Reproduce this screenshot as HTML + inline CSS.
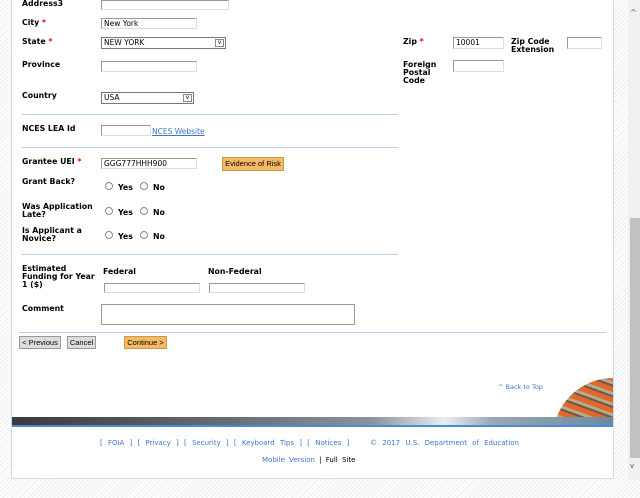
<!DOCTYPE html>
<html><head><style>
body{margin:0;width:640px;height:480px;overflow:hidden;position:relative;font-family:"DejaVu Sans",Verdana,sans-serif;font-size:7.5px;background:repeating-linear-gradient(135deg,#fff 0 2px,#ececec 2px 3px);}
.a{position:absolute;white-space:nowrap;}
#panel{left:11px;top:0;width:601px;height:478px;background:#fff;border-left:1px solid #cfdcec;border-right:1px solid #cfdcec;border-bottom:1px solid #cfdcec;}
.l{position:absolute;font-weight:bold;color:#000;line-height:8px;font-size:7.8px;white-space:nowrap;}
.r{color:#e00;}
.in{position:absolute;background:#fff;border:1px solid #999;border-right-color:#ddd;border-bottom-color:#ddd;box-sizing:border-box;font-size:7.5px;line-height:9px;padding-left:2px;white-space:nowrap;}
.sel{position:absolute;background:#fff;border:1px solid #777;box-sizing:border-box;font-size:7.5px;padding-left:2px;line-height:9px;}
.sel b{position:absolute;right:1px;top:1px;width:9px;height:8px;border:1px solid #888;box-sizing:border-box;font-size:6px;line-height:6px;text-align:center;font-weight:normal;}
.hr{position:absolute;height:1px;background:#b8d0ea;}
.rad{position:absolute;width:8px;height:8px;border:1px solid #888;border-radius:50%;box-sizing:border-box;}
.btn{position:absolute;background:#ddd;border:1px solid #999;box-sizing:border-box;font-family:"Liberation Sans",sans-serif;font-size:7.5px;text-align:center;line-height:12px;white-space:nowrap;padding:0;overflow:hidden;}
.lk{color:#3a78c4;}
</style></head><body>
<div class="a" id="panel"></div>
<div class="a" style="left:628px;top:0;width:12px;height:480px;background:#f0f0f0"></div>
<div class="a" style="left:630px;top:218px;width:10px;height:240px;background:#c1c1c1"></div>
<div class="a" style="left:630px;top:8px;font-size:8px;color:#555">^</div>
<div class="a" style="left:630px;top:462px;font-size:7px;color:#555">v</div>

<div class="l" style="left:22px;top:0">Address3</div>
<div class="in" style="left:101px;top:0;width:128px;height:10px"></div>
<div class="l" style="left:22px;top:19px">City <span class="r">*</span></div>
<div class="in" style="left:101px;top:18px;width:96px;height:11px">New York</div>
<div class="l" style="left:22px;top:38px">State <span class="r">*</span></div>
<div class="sel" style="left:101px;top:37px;width:125px;height:12px">NEW YORK<b>v</b></div>
<div class="l" style="left:22px;top:61px">Province</div>
<div class="in" style="left:101px;top:61px;width:96px;height:11px"></div>
<div class="l" style="left:22px;top:92px">Country</div>
<div class="sel" style="left:101px;top:92px;width:93px;height:12px">USA<b>v</b></div>

<div class="l" style="left:403px;top:38px">Zip <span class="r">*</span></div>
<div class="in" style="left:453px;top:37px;width:51px;height:12px">10001</div>
<div class="l" style="left:511px;top:38px">Zip Code<br>Extension</div>
<div class="in" style="left:567px;top:37px;width:35px;height:12px"></div>
<div class="l" style="left:403px;top:61px">Foreign<br>Postal<br>Code</div>
<div class="in" style="left:453px;top:60px;width:51px;height:12px"></div>

<div class="hr" style="left:22px;top:114px;width:376px"></div>
<div class="l" style="left:22px;top:125px">NCES LEA Id</div>
<div class="in" style="left:101px;top:125px;width:50px;height:11px"></div>
<div class="a lk" style="left:152px;top:127px;text-decoration:underline">NCES Website</div>
<div class="hr" style="left:22px;top:147px;width:376px"></div>

<div class="l" style="left:22px;top:158px">Grantee UEI <span class="r">*</span></div>
<div class="in" style="left:101px;top:158px;width:96px;height:11px">GGG777HHH900</div>
<div class="btn" style="left:222px;top:157px;width:62px;height:14px;background:#f6b964;border-color:#c99a4a">Evidence of Risk</div>

<div class="l" style="left:22px;top:178px">Grant Back?</div>
<div class="l" style="left:22px;top:203px">Was Application<br>Late?</div>
<div class="l" style="left:22px;top:227px">Is Applicant a<br>Novice?</div>
<div class="rad" style="left:105px;top:182px"></div><div class="l" style="left:118px;top:184px">Yes</div>
<div class="rad" style="left:140px;top:182px"></div><div class="l" style="left:153px;top:184px">No</div>
<div class="rad" style="left:105px;top:207px"></div><div class="l" style="left:118px;top:209px">Yes</div>
<div class="rad" style="left:140px;top:207px"></div><div class="l" style="left:153px;top:209px">No</div>
<div class="rad" style="left:105px;top:231px"></div><div class="l" style="left:118px;top:233px">Yes</div>
<div class="rad" style="left:140px;top:231px"></div><div class="l" style="left:153px;top:233px">No</div>

<div class="hr" style="left:22px;top:254px;width:376px"></div>
<div class="l" style="left:22px;top:265px">Estimated<br>Funding for Year<br>1 ($)</div>
<div class="l" style="left:103px;top:268px">Federal</div>
<div class="l" style="left:208px;top:268px">Non-Federal</div>
<div class="in" style="left:104px;top:283px;width:96px;height:10px"></div>
<div class="in" style="left:209px;top:283px;width:96px;height:10px"></div>
<div class="l" style="left:22px;top:305px">Comment</div>
<div class="in" style="left:101px;top:304px;width:254px;height:21px;border-color:#999"></div>

<div class="hr" style="left:19px;top:332px;width:587px"></div>
<div class="btn" style="left:19px;top:336px;width:42px;height:13px">&lt; Previous</div>
<div class="btn" style="left:67px;top:336px;width:29px;height:13px">Cancel</div>
<div class="btn" style="left:124px;top:336px;width:43px;height:13px;background:#f6b964;border-color:#c99a4a">Continue &gt;</div>

<div class="a lk" style="left:498px;top:383px;font-size:6.5px">^ Back to Top</div>
<div class="a" style="left:553px;top:378px;width:120px;height:120px;border-radius:50%;background:repeating-linear-gradient(20deg,#e0682a 0 5px,#6a5a48 5px 7px,#b8a890 7px 10px);overflow:hidden;clip-path:inset(0 60px 81px 0)"></div>
<div class="a" style="left:12px;top:417px;width:601px;height:8px;background:linear-gradient(90deg,#3a3a3a,#6a747c 40%,#8a949c 60%,#e8eef2 72%,#9aa8b4 80%,#6b8aa0)"></div>
<div class="a" style="left:12px;top:425px;width:601px;height:2px;background:#4a8ad8"></div>
<div class="a lk" style="left:100px;top:439px;font-size:7px;word-spacing:3px">[ FOIA ] [ Privacy ] [ Security ] [ Keyboard Tips ] [ Notices ] &nbsp;&nbsp; © 2017 U.S. Department of Education</div>
<div class="a" style="left:262px;top:456px;font-size:7px;word-spacing:2px"><span class="lk">Mobile Version</span> | Full Site</div>
</body></html>
